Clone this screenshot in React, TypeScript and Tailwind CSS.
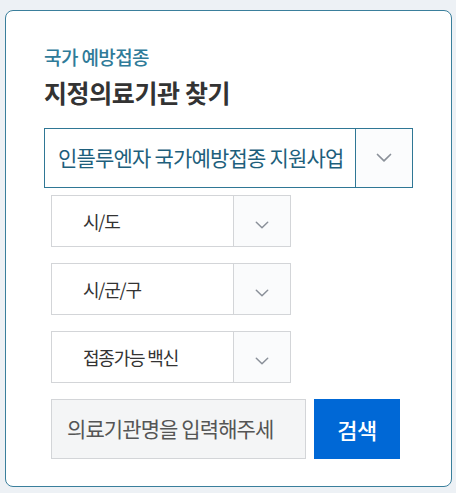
import React from "react";

function Chevron({ w = 14 }: { w?: number }) {
  return (
    <svg width={w} height={w * 0.6} viewBox="0 0 16 9.6" fill="none">
      <path d="M1.5 1.5l6.5 6.3 6.5-6.3" stroke="#8a9099" strokeWidth="1.7" strokeLinecap="round" strokeLinejoin="round" />
    </svg>
  );
}

function SmallSelect({ label }: { label: string }) {
  return (
    <div className="flex h-[52px] w-[240px] border border-[#d3d5d8] bg-white">
      <div className="flex flex-1 items-center pl-[31px] text-[18px] tracking-[-1.2px] text-[#333]">{label}</div>
      <div className="flex w-[57px] items-center justify-center border-l border-[#d3d5d8] bg-[#fafbfc] pt-[8px]">
        <Chevron w={14} />
      </div>
    </div>
  );
}

export default function App() {
  return (
    <div
      className="min-h-[493px] w-[456px] bg-[#edf1f5] pl-[5px] pt-[10px]"
      style={{ fontFamily: '"Noto Sans CJK KR", "Noto Sans", sans-serif' }}
    >
      <div className="h-[477px] w-[447px] rounded-[8px] border border-[#3a7f9c] bg-white pl-[38px] pt-[33px]">
        <div className="text-[19px] font-medium leading-[26px] tracking-[-0.6px] text-[#2f7b99]">국가 예방접종</div>
        <div className="mt-[6px] text-[25px] font-bold leading-[32px] tracking-[-0.4px] text-[#333]">지정의료기관 찾기</div>
        <div className="mt-[20px] flex h-[60px] w-[369px] border border-[#2f7795] bg-white">
          <div className="flex flex-1 items-center whitespace-nowrap pl-[13px] text-[21px] tracking-[-0.8px] text-[#1e5f7c]">
            인플루엔자 국가예방접종 지원사업
          </div>
          <div className="flex w-[57px] items-center justify-center border-l border-[#2f7795] bg-[#fbfcfd]">
            <Chevron w={16} />
          </div>
        </div>
        <div className="ml-[7px] mt-[7px] flex flex-col gap-[16px]">
          <SmallSelect label="시/도" />
          <SmallSelect label="시/군/구" />
          <SmallSelect label="접종가능 백신" />
        </div>
        <div className="ml-[7px] mt-[16px] flex gap-[8px]">
          <div className="flex h-[60px] w-[255px] items-center overflow-hidden whitespace-nowrap border border-[#d3d5d8] bg-[#f4f5f6] pl-[15px] text-[21px] tracking-[-0.9px] text-[#555]">
            의료기관명을 입력해주세
          </div>
          <button className="flex h-[60px] w-[86px] items-center justify-center bg-[#0068d6] text-[22px] font-medium tracking-[-0.5px] text-white">
            검색
          </button>
        </div>
      </div>
    </div>
  );
}
